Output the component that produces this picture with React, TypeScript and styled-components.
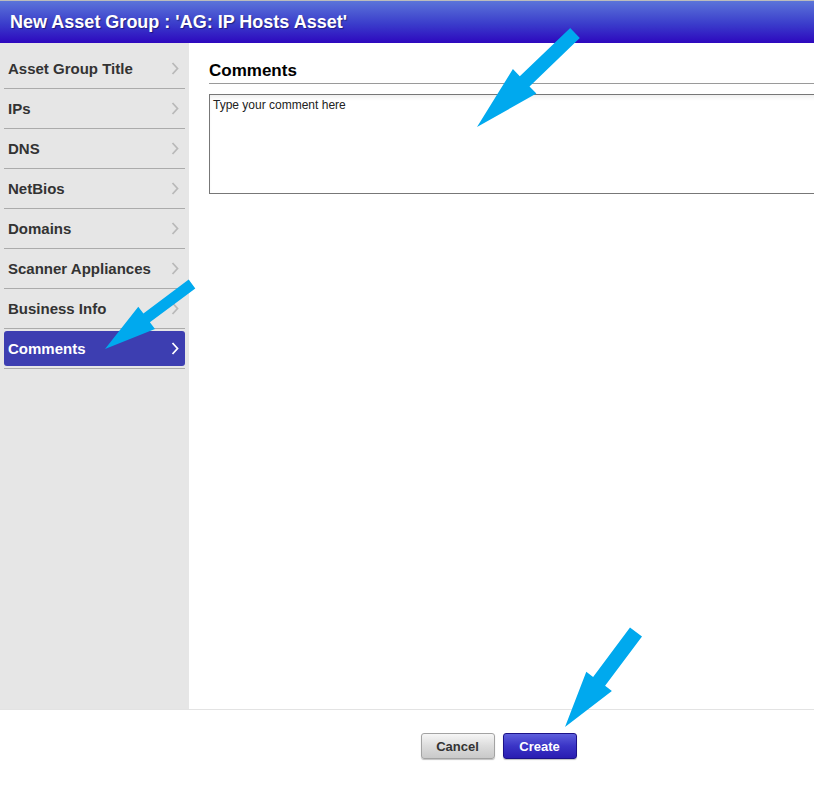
import { useEffect, useRef } from 'react';
import styled, { createGlobalStyle } from 'styled-components';

const GlobalStyle = createGlobalStyle`
    html, body {
        margin: 0;
        padding: 0;
        overflow: hidden;
        background: #fff;
    }
    body {
        font-family: 'Liberation Sans', Arial, sans-serif;
    }
`;

const navItems = [
    'Asset Group Title',
    'IPs',
    'DNS',
    'NetBios',
    'Domains',
    'Scanner Appliances',
    'Business Info',
    'Comments',
];

type Pt = [number, number];

// tail center -> tip, squared tail, flat-based head
const arrowPoints = (tail: Pt, tip: Pt, shaft: number, headLen: number, headW: number) => {
    const dx = tip[0] - tail[0];
    const dy = tip[1] - tail[1];
    const len = Math.hypot(dx, dy);
    const ux = dx / len;
    const uy = dy / len;
    const px = -uy;
    const py = ux;
    const bx = tip[0] - ux * headLen;
    const by = tip[1] - uy * headLen;
    const pts: Pt[] = [
        [tail[0] + (px * shaft) / 2, tail[1] + (py * shaft) / 2],
        [bx + (px * shaft) / 2, by + (py * shaft) / 2],
        [bx + (px * headW) / 2, by + (py * headW) / 2],
        tip,
        [bx - (px * headW) / 2, by - (py * headW) / 2],
        [bx - (px * shaft) / 2, by - (py * shaft) / 2],
        [tail[0] - (px * shaft) / 2, tail[1] - (py * shaft) / 2],
    ];
    return pts.map(p => `${p[0].toFixed(1)},${p[1].toFixed(1)}`).join(' ');
};

const arrows = [
    { tail: [575, 33] as Pt, tip: [477, 127] as Pt, shaft: 14, headLen: 66, headW: 34 },
    { tail: [192, 284] as Pt, tip: [105, 349] as Pt, shaft: 11, headLen: 52, headW: 28 },
    { tail: [636, 632] as Pt, tip: [565, 727] as Pt, shaft: 15, headLen: 57, headW: 32 },
];

const Chevron = () => (
    <svg width="8" height="13" viewBox="0 0 8 13">
        <path d="M1.5 1 L6.5 6.5 L1.5 12" fill="none" stroke="currentColor" strokeWidth="1.8" />
    </svg>
);

const App = () => {
    const noteRef = useRef<HTMLTextAreaElement>(null);

    useEffect(() => {
        const el = noteRef.current;
        if (el) {
            el.focus();
            el.setSelectionRange(18, 18);
        }
    }, []);

    return (
        <>
            <GlobalStyle />
            <Dialog>
                <Header>New Asset Group : 'AG: IP Hosts Asset'</Header>
                <Body>
                    <Sidebar>
                        <NavList>
                            {navItems.map(item => (
                                <NavItem key={item}>
                                    <NavLink $active={item === 'Comments'}>
                                        <span>{item}</span>
                                        <Chevron />
                                    </NavLink>
                                </NavItem>
                            ))}
                        </NavList>
                    </Sidebar>
                    <Main>
                        <SectionTitle>Comments</SectionTitle>
                        <CommentBox ref={noteRef} defaultValue="Type your comment here" />
                    </Main>
                </Body>
                <Footer>
                    <Button>Cancel</Button>
                    <Button $primary>Create</Button>
                </Footer>
                <Overlay width="814" height="803">
                    {arrows.map((a, i) => (
                        <polygon
                            key={i}
                            points={arrowPoints(a.tail, a.tip, a.shaft, a.headLen, a.headW)}
                            fill="#00a9ee"
                        />
                    ))}
                </Overlay>
            </Dialog>
        </>
    );
};

export default App;

const Dialog = styled.div`
    position: relative;
    width: 100%;
    height: 100vh;
    display: flex;
    flex-direction: column;
    overflow: hidden;
`;

const Header = styled.div`
    height: 42px;
    flex-shrink: 0;
    border-top: 1px solid #bcbcbc;
    background: linear-gradient(#5b74d9, #3a3ccb 55%, #2d08be);
    color: #fff;
    font-size: 18px;
    font-weight: 700;
    line-height: 42px;
    padding-left: 10px;
    text-shadow: 1px 1px 1px rgba(0, 0, 40, 0.45);
`;

const Body = styled.div`
    flex: 1;
    display: flex;
    min-height: 0;
`;

const Sidebar = styled.div`
    width: 189px;
    flex-shrink: 0;
    background: #e6e6e6;
    padding: 6px 4px 0;
    box-sizing: border-box;
`;

const NavList = styled.ul`
    list-style: none;
    margin: 0;
    padding: 0;
`;

const NavItem = styled.li`
    padding: 2px 0;
    border-bottom: 1px solid #ababab;
`;

const NavLink = styled.div<{ $active?: boolean }>`
    height: 35px;
    display: flex;
    align-items: center;
    justify-content: space-between;
    padding: 0 6px 0 4px;
    border-radius: 3px;
    background: ${p => (p.$active ? '#3d3eb1' : 'transparent')};
    color: ${p => (p.$active ? '#fff' : '#333')};
    font-size: 15px;
    font-weight: 700;
    cursor: pointer;
    svg {
        color: ${p => (p.$active ? '#fff' : '#b9b9b9')};
    }
`;

/* the dialog continues past the right edge of the window, so the
   comment box runs on without a visible right border */
const Main = styled.div`
    flex: 1;
    min-width: 0;
    padding: 18px 0 0 20px;
    background: #fff;
    overflow: hidden;
`;

const SectionTitle = styled.h2`
    margin: 0;
    font-size: 17px;
    line-height: 20px;
    font-weight: 700;
    color: #000;
    padding-bottom: 2px;
    border-bottom: 1px solid #9a9a9a;
`;

const CommentBox = styled.textarea`
    display: block;
    width: calc(100% + 4px);
    height: 100px;
    margin-top: 10px;
    box-sizing: border-box;
    border: 1px solid #777;
    padding: 3px;
    resize: none;
    outline: none;
    font-family: 'Liberation Sans', Arial, sans-serif;
    font-size: 12px;
    color: #222;
    caret-color: #000;
    box-shadow: inset 0 4px 5px -2px rgba(0, 0, 0, 0.08);
`;

const Footer = styled.div`
    height: 94px;
    flex-shrink: 0;
    box-sizing: border-box;
    border-top: 1px solid #e3e3e3;
    padding: 23px 0 0 183px;
    display: flex;
    justify-content: center;
    align-items: flex-start;
    gap: 8px;
`;

const Button = styled.button<{ $primary?: boolean }>`
    height: 26px;
    min-width: 74px;
    padding: 0 12px;
    border-radius: 3px;
    font-family: 'Liberation Sans', Arial, sans-serif;
    font-size: 13px;
    font-weight: 700;
    cursor: pointer;
    border: 1px solid ${p => (p.$primary ? '#1c1288' : '#a3a3a3')};
    color: ${p => (p.$primary ? '#fff' : '#333')};
    background: ${p =>
        p.$primary
            ? 'linear-gradient(#5d5fdc, #3a34c6 50%, #2a1db2)'
            : 'linear-gradient(#f6f6f6, #dcdcdc 50%, #c9c9c9)'};
    box-shadow: 0 1px 1px rgba(0, 0, 0, 0.25);
`;

const Overlay = styled.svg`
    position: absolute;
    top: 0;
    left: 0;
    pointer-events: none;
`;
